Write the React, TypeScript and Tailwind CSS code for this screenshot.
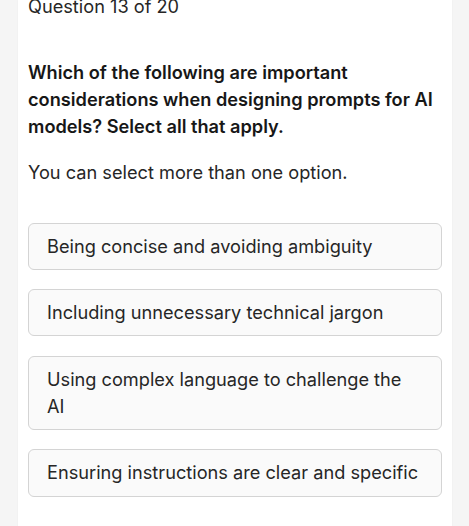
import React from "react";

const options = [
  "Being concise and avoiding ambiguity",
  "Including unnecessary technical jargon",
  "Using complex language to challenge the AI",
  "Ensuring instructions are clear and specific",
];

export default function App() {
  return (
    <div
      className="min-h-[526px] w-[469px] bg-[#f5f5f5] flex justify-center"
      style={{ fontFamily: "Inter, 'Noto Sans', sans-serif" }}
    >
      <div className="w-[434px] ml-[1px] bg-white shadow-[0_0_2px_rgba(0,0,0,0.04)] px-[10px] pb-[30px]">
        <div className="text-[18.2px] leading-[18px] text-[#262626] -mt-[3px]">Question 13 of 20</div>
        <h2 className="mt-[44px] text-[18.2px] leading-[27px] font-semibold text-[#171717]">
          Which of the following are important considerations when designing prompts for AI models? Select all that apply.
        </h2>
        <p className="mt-[19px] text-[18.2px] leading-[27px] text-[#262626]">You can select more than one option.</p>
        <div className="mt-[36.7px] flex flex-col gap-[19.2px]">
          {options.map((o) => (
            <button
              key={o}
              className="text-left w-full rounded-[6px] border border-[#d4d4d4] bg-[#fafafa] px-[18px] py-[9px] text-[18.2px] leading-[1.5] text-[#262626]"
            >
              {o}
            </button>
          ))}
        </div>
      </div>
    </div>
  );
}
